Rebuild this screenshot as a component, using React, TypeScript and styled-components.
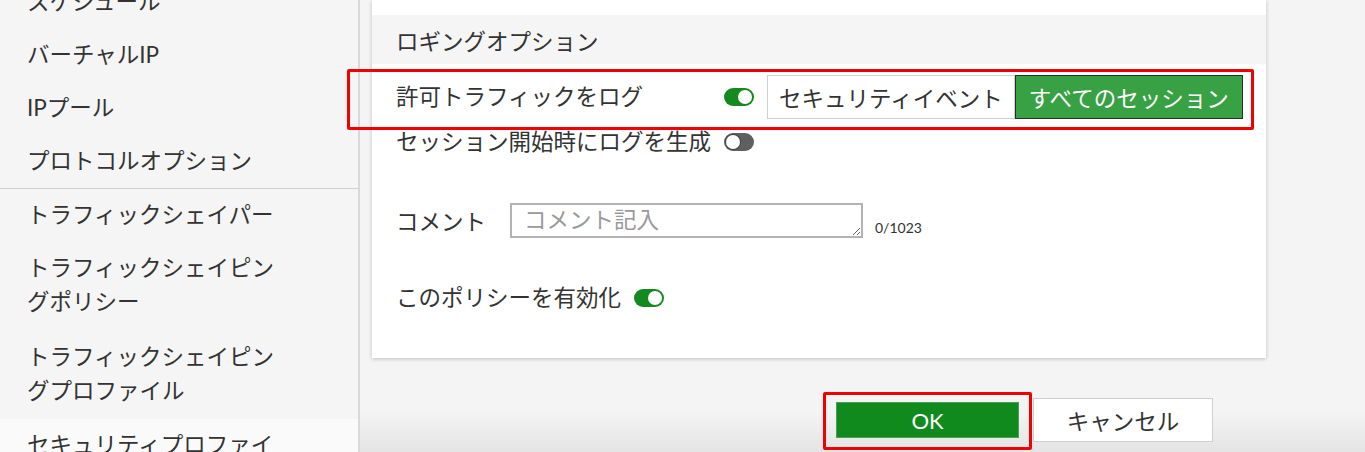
import React from "react";
import styled, { createGlobalStyle } from "styled-components";

const sidebarItems = [
  { title: "スケジュール" },
  { title: "バーチャルIP" },
  { title: "IPプール" },
  { title: "プロトコルオプション", divided: true },
  { title: "トラフィックシェイパー" },
  { title: "トラフィックシェイピングポリシー" },
  { title: "トラフィックシェイピングプロファイル" },
  { title: "セキュリティプロファイル", active: true },
];

const App = () => {
  return (
    <>
      <GlobalStyle />
      <Page>
        <Sidebar>
          <NavList>
            {sidebarItems.map((i) => (
              <NavItem key={i.title} $divided={i.divided} $active={i.active}>
                {i.title}
              </NavItem>
            ))}
          </NavList>
        </Sidebar>

        <Main>
          <Panel>
            <SectionHeader>ロギングオプション</SectionHeader>
            <FormBody>
              <LogRow>
                <LogLabel>許可トラフィックをログ</LogLabel>
                <Toggle $on />
                <Segmented>
                  <Segment>セキュリティイベント</Segment>
                  <Segment $selected>すべてのセッション</Segment>
                </Segmented>
              </LogRow>

              <InlineRow>
                <span>セッション開始時にログを生成</span>
                <Toggle />
              </InlineRow>

              <CommentRow>
                <CommentLabel>コメント</CommentLabel>
                <CommentBox placeholder="コメント記入" />
                <Counter>0/1023</Counter>
              </CommentRow>

              <InlineRow $spaced>
                <span>このポリシーを有効化</span>
                <Toggle $on />
              </InlineRow>
            </FormBody>
          </Panel>

          <Footer>
            <OkButton>OK</OkButton>
            <CancelButton>キャンセル</CancelButton>
          </Footer>
        </Main>

        <Highlight $left={347} $top={69} $width={907} $height={61} />
        <Highlight $left={823} $top={392} $width={209} $height={58} />
      </Page>
    </>
  );
};

const GlobalStyle = createGlobalStyle`
  html, body {
    margin: 0;
    padding: 0;
    overflow: hidden;
    background: #f4f4f4;
  }
  body {
    font-family: Lato, "Noto Sans CJK JP", sans-serif;
    color: #333;
  }
  * {
    box-sizing: border-box;
  }
`;

const Page = styled.div`
  position: relative;
  display: flex;
  width: 1365px;
  height: 452px;
  overflow: hidden;
`;

const Sidebar = styled.nav`
  width: 360px;
  flex-shrink: 0;
  background: #f5f5f5;
  border-right: 2px solid #d9d9d9;
  overflow: hidden;
`;

const NavList = styled.ul`
  list-style: none;
  margin: -24.5px 0 0;
  padding: 0;
`;

const NavItem = styled.li<{ $divided?: boolean; $active?: boolean }>`
  padding: 9.5px 80px 9.5px 27px;
  font-size: 22.5px;
  line-height: 34px;
  color: #333;
  background: ${(p) => (p.$active ? "#fafafa" : "transparent")};
  border-bottom: ${(p) => (p.$divided ? "1px solid #cfcfcf" : "none")};
  &:nth-child(6),
  &:nth-child(7) {
    padding-bottom: 11px;
  }
`;

const Main = styled.main`
  flex: 1;
  display: flex;
  flex-direction: column;
  background: linear-gradient(
    to bottom,
    #f4f4f4 0,
    #f4f4f4 412px,
    #e4e4e4 452px
  );
`;

const Panel = styled.section`
  margin-left: 12px;
  width: 894px;
  padding: 15px 0 43px;
  background: #fff;
  box-shadow: 0 1px 4px rgba(0, 0, 0, 0.22);
`;

const SectionHeader = styled.div`
  display: flex;
  align-items: center;
  height: 49px;
  padding-left: 24px;
  background: #f5f5f5;
  font-size: 22.5px;
`;

const FormBody = styled.div`
  padding: 11px 24px 0;
  font-size: 22.5px;
`;

const LogRow = styled.div`
  display: flex;
  align-items: center;
  height: 44px;
`;

const LogLabel = styled.span`
  width: 328px;
  flex-shrink: 0;
  margin-top: -5px;
`;

const Toggle = styled.span<{ $on?: boolean }>`
  position: relative;
  display: inline-block;
  width: 30px;
  height: 18px;
  flex-shrink: 0;
  border-radius: 9px;
  background: ${(p) => (p.$on ? "#14891f" : "#5f5f5f")};

  &::after {
    content: "";
    position: absolute;
    top: 2px;
    left: ${(p) => (p.$on ? "14px" : "2px")};
    width: 14px;
    height: 14px;
    border-radius: 50%;
    background: #fff;
    box-shadow: ${(p) => (p.$on ? "none" : "0 0 0 1px #444")};
  }
`;

const Segmented = styled.div`
  display: flex;
  flex-shrink: 0;
  margin-left: 13px;
  height: 44px;
`;

const Segment = styled.div<{ $selected?: boolean }>`
  display: flex;
  align-items: center;
  flex-shrink: 0;
  white-space: nowrap;
  padding: 0 ${(p) => (p.$selected ? "13px" : "11px")};
  font-size: 22.5px;
  color: ${(p) => (p.$selected ? "#fff" : "#333")};
  background: ${(p) => (p.$selected ? "#37a143" : "#fff")};
  border: 1px solid ${(p) => (p.$selected ? "#2b2b2b" : "#cfcfcf")};
`;

const InlineRow = styled.div<{ $spaced?: boolean }>`
  display: flex;
  align-items: center;
  gap: 13px;
  margin-top: ${(p) => (p.$spaced ? "43px" : "6px")};
  line-height: 34px;
`;

const CommentRow = styled.div`
  display: flex;
  align-items: center;
  margin-top: 44px;
`;

const CommentLabel = styled.span`
  width: 114px;
  margin-top: -2px;
`;

const CommentBox = styled.textarea`
  width: 353px;
  height: 35px;
  padding: 0 12px;
  border: 2px solid #b3b3b3;
  font-family: Lato, "Noto Sans CJK JP", sans-serif;
  font-size: 22.5px;
  line-height: 30px;
  color: #333;
  resize: both;
  outline: none;

  &::placeholder {
    color: #9a9a9a;
  }
`;

const Counter = styled.span`
  align-self: flex-end;
  margin: 0 0 2px 12px;
  font-size: 14px;
  line-height: 17px;
`;

const Footer = styled.div`
  display: flex;
  align-items: center;
  gap: 14px;
  margin-top: 40px;
  padding-left: 476px;
`;

const OkButton = styled.button`
  width: 183px;
  height: 36px;
  border: 1px solid #4f9d55;
  background: #108a1c;
  color: #fff;
  font-family: Lato, "Noto Sans CJK JP", sans-serif;
  font-size: 22px;
`;

const CancelButton = styled.button`
  width: 180px;
  height: 44px;
  border: 1px solid #cfcfcf;
  background: #fff;
  color: #333;
  font-family: Lato, "Noto Sans CJK JP", sans-serif;
  font-size: 22.5px;
`;

const Highlight = styled.div<{
  $left: number;
  $top: number;
  $width: number;
  $height: number;
}>`
  position: absolute;
  left: ${(p) => p.$left}px;
  top: ${(p) => p.$top}px;
  width: ${(p) => p.$width}px;
  height: ${(p) => p.$height}px;
  border: 3.5px solid #f00000;
  border-radius: 2px;
  pointer-events: none;
`;

export default App;
